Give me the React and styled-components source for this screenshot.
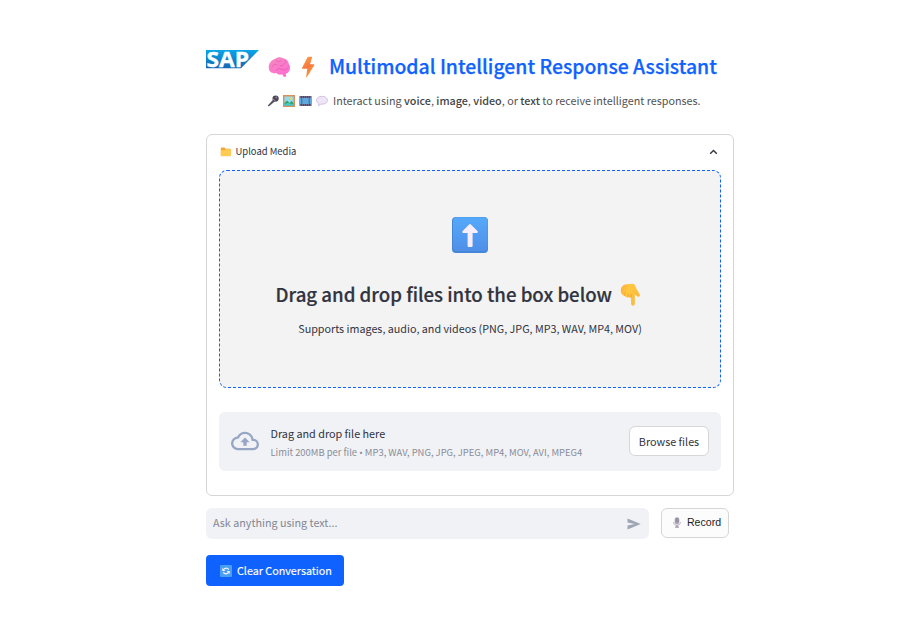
import React from 'react';
import styled, { createGlobalStyle } from 'styled-components';

const GlobalStyle = createGlobalStyle`
  * { box-sizing: border-box; }
  body {
    margin: 0;
    background: #fff;
    color: #31333f;
    font-family: "Noto Sans CJK SC", "Noto Sans", sans-serif;
    font-size: 10.8px;
    line-height: 16px;
  }
  button, input { font: inherit; color: inherit; margin: 0; }
  h1, h3, p { margin: 0; }
  svg { display: block; flex: none; overflow: visible; }
`;

const Page = styled.main`
  width: 528px;
  margin-left: 206px;
  padding-top: 50px;
`;

const Header = styled.header`
  display: flex;
  height: 84px;
`;

const HeaderText = styled.div`
  padding: 2px 0 0 7px;
`;

const Title = styled.h1`
  display: flex;
  align-items: center;
  height: 28px;
  padding-left: 1px;
  color: #0f62fe;
  font-size: 19.4px;
  font-weight: 500;
  line-height: 28px;
  white-space: nowrap;
  -webkit-text-stroke: 0.25px;
`;

const TitleIcons = styled.span`
  display: flex;
  align-items: center;
  gap: 10px;
  width: 61px;
  padding-top: 1px;
`;

const Subtitle = styled.p`
  display: flex;
  align-items: center;
  gap: 4px;
  margin-top: 13px;
  color: #525252;
  font-size: 10.77px;
  white-space: nowrap;
  b { font-weight: 500; color: #444; }
`;

const SubtitleIcons = styled.span`
  display: flex;
  gap: 4px;
  width: 62px;
`;

const Expander = styled.section`
  height: 362px;
  border: 1px solid #d6d6d8;
  border-radius: 6px;
  padding: 0 12px;
`;

const Summary = styled.div`
  display: flex;
  align-items: center;
  height: 35px;
  padding: 0 3px 2px 1px;
  font-size: 9.45px;
`;

const SummaryLabel = styled.span`
  flex: 1;
  padding: 0 0 2px 4.5px;
`;

const DropBox = styled.div`
  display: flex;
  flex-direction: column;
  align-items: center;
  height: 218px;
  padding-top: 46px;
  border: 1px dashed #0f62fe;
  border-radius: 8px;
  background: #f3f3f3;
`;

const DropTitle = styled.h3`
  display: flex;
  align-items: center;
  gap: 8px;
  width: 389px;
  height: 28px;
  margin-top: 27px;
  font-size: 18.65px;
  font-weight: 500;
  line-height: 28px;
  white-space: nowrap;
  -webkit-text-stroke: 0.2px;
`;

const DropHint = styled.p`
  margin-top: 13px;
  font-size: 10.75px;
  white-space: nowrap;
`;

const Uploader = styled.div`
  display: flex;
  align-items: center;
  height: 59px;
  margin-top: 24px;
  padding: 0 12px 1px 11.5px;
  border-radius: 6px;
  background: #f0f2f6;
`;

const UploaderText = styled.div`
  flex: 1;
  padding: 4px 0 0 12px;
`;

const Limit = styled.p`
  margin-top: 3px;
  color: #8b8d97;
  font-size: 9.42px;
  white-space: nowrap;
`;

const Bullet = styled.span`
  font-family: "Noto Sans", sans-serif;
`;

const OutlineButton = styled.button`
  display: flex;
  align-items: center;
  justify-content: center;
  width: ${(p) => p.$width}px;
  height: 30px;
  padding: 0;
  border: 1px solid #d6d6d9;
  border-radius: 6px;
  background: #fff;
  white-space: nowrap;
`;

const RecordButton = styled(OutlineButton)`
  gap: 5px;
  padding: 0 7px 2px 10px;
  background: #fcfcfd;
  color: #1c1e26;
  font-family: "Liberation Sans", Arial, sans-serif;
  font-size: 10.6px;
`;

const Composer = styled.div`
  display: flex;
  gap: 12px;
  margin-top: 12px;
`;

const ChatBox = styled.div`
  display: flex;
  align-items: center;
  width: 443px;
  height: 31px;
  padding: 0 8px 0 7px;
  border-radius: 6px;
  background: #f0f2f6;
`;

const ChatInput = styled.input`
  flex: 1;
  height: 18px;
  padding: 0 0 2px;
  border: 0;
  outline: 0;
  background: none;
  font-size: 10.75px;
  &::placeholder { color: #858792; opacity: 1; }
`;

const ClearButton = styled.button`
  display: flex;
  align-items: center;
  gap: 5px;
  width: 138px;
  height: 31px;
  margin-top: 16px;
  padding: 0 0 0 14px;
  border: 0;
  border-radius: 4px;
  background: #0f62fe;
  color: #fff;
  font-size: 10.75px;
  white-space: nowrap;
  -webkit-text-stroke: 0.15px;
`;

const SapLogo = () => (
  <svg width="54" height="24" viewBox="0 0 54 24">
    <defs>
      <linearGradient id="sap" x1="0" y1="0" x2="0" y2="1">
        <stop offset="0" stopColor="#0aa5e6" />
        <stop offset="1" stopColor="#1665b5" />
      </linearGradient>
    </defs>
    <path d="M0 0H53L35 18.3H0Z" fill="url(#sap)" />
    <text x="0.500" y="16.800" textLength="42.500" lengthAdjust="spacingAndGlyphs" fill="#fff" stroke="#fff" strokeWidth=".4"
      fontFamily="Open Sans, Liberation Sans, sans-serif" fontWeight="700" fontSize="22">SAP</text>
  </svg>
);

const Brain = () => (
  <svg width="23" height="22" viewBox="0 0 23 22">
    <defs>
      <linearGradient id="brain" x1="0" y1="0" x2=".5" y2="1">
        <stop offset="0" stopColor="#f48ac0" />
        <stop offset="1" stopColor="#ff6fd0" />
      </linearGradient>
    </defs>
    <path d="M.8 12C.3 8 3 4 7 3C9 .9 13 .9 15 2.300C18.500 2.500 20.500 5.500 20.900 8C22.700 10.500 22.400 14 20.500 16C19.800 17 18.500 17.600 17.800 17.800L18.200 20Q17 21.500 15.500 20.500L14.200 18.300C11.500 19.300 9.500 18.200 8.500 17C4.500 18 .8 15.800 .8 12Z" fill="url(#brain)" />
    <path d="M4 11Q6 7 9 8.500M8 4.500Q10 7 13 5M12 10Q15 11 16.500 7.500M8 14Q11 11 14 13.500Q17 15 20 12M17 5Q18 6 18 7" fill="none" stroke="#df5cae" strokeWidth=".7" strokeLinecap="round" />
  </svg>
);

const Bolt = () => (
  <svg width="15" height="22" viewBox="0 0 15 22">
    <defs>
      <linearGradient id="bolt" x1="0" y1="0" x2=".5" y2="1">
        <stop offset="0" stopColor="#ffb04a" />
        <stop offset=".55" stopColor="#f8763f" />
        <stop offset="1" stopColor="#f7a03c" />
      </linearGradient>
    </defs>
    <path d="M7.300 .8H10.500Q11.300 .8 11 1.600L9 8.300H12.800Q13.800 8.400 13.200 9.300L6 21Q5.300 21.700 5.200 20.800L6.200 12.800H1.500Q.7 12.600 1 11.900L6.300 1.500Q6.700 .8 7.300 .8Z" fill="url(#bolt)" />
  </svg>
);

const Mic = () => (
  <svg width="12" height="12" viewBox="0 0 12 12">
    <path d="M6.200 4.500L8 6.300L1.800 11.500L.8 10.500Z" fill="#5b5262" />
    <circle cx="8.600" cy="3.600" r="3.100" fill="#4b4553" />
    <path d="M5.800 3.600L9 6.700" stroke="#9a92a3" strokeWidth="1" />
    <circle cx="9.300" cy="2.500" r="1" fill="#8b8593" />
  </svg>
);

const Picture = () => (
  <svg width="12" height="12" viewBox="0 0 12 12">
    <path d="M0 0H12V12H0Z" fill="#d9905f" />
    <path d="M1.500 1.500H10.500V10.500H1.500Z" fill="#8edcf2" />
    <path d="M1.500 8L4 5.500L6.500 8L8.500 6L10.500 8V10.500H1.500Z" fill="#2fa66a" />
    <path d="M1.500 9L5 8L10.500 9.500V10.500H1.500Z" fill="#4bc5cf" />
    <circle cx="8" cy="3.500" r="1.200" fill="#ffd447" />
  </svg>
);

const Film = () => (
  <svg width="13" height="12" viewBox="0 0 13 12">
    <path d="M.5 1H12.500V11H.5Z" fill="#4b4766" />
    <path d="M.5 3H2.500V9H.5ZM3.200 3H9.800V9H3.200ZM10.500 3H12.500V9H10.500Z" fill="#5fa8df" />
    <path d="M1 2H12.500M1 10H12.500" stroke="#9f99b8" strokeWidth=".8" strokeDasharray="1 1" />
  </svg>
);

const Bubble = () => (
  <svg width="12" height="12" viewBox="0 0 12 12">
    <path d="M6 1.300C9.200 1.300 11.500 3 11.500 5.300C11.500 7.700 9.200 9.200 6 9.200L4.500 9.100Q4 10.600 2.600 10.900Q2.200 10.800 2.500 10.200L2.700 8.400C1.300 7.700 .5 6.600 .5 5.300C.5 3 2.800 1.300 6 1.300Z" fill="#eee6f7" stroke="#cbb9dc" strokeWidth=".8" />
  </svg>
);

const Folder = () => (
  <svg width="11" height="10" viewBox="0 0 11 10">
    <path d="M.8 1.300Q.8 .6 1.500 .6H4.500L5.500 1.800H10.300Q11 1.800 11 2.500V8H.8Z" fill="#eda83b" />
    <path d="M.8 3.300H4.700L5.700 2.300H11V8.500Q11 9.300 10.300 9.300H1.500Q.8 9.300 .8 8.500Z" fill="#ffcb55" />
  </svg>
);

const Chevron = () => (
  <svg width="9" height="8" viewBox="0 0 9 8">
    <path d="M1.200 5.800L4.500 2.600L7.800 5.800" fill="none" stroke="#31333f" strokeWidth="1.400" />
  </svg>
);

const UpArrow = () => (
  <svg width="36" height="36" viewBox="0 0 36 36">
    <defs>
      <linearGradient id="tile" x1="0" y1="0" x2="0" y2="1">
        <stop offset="0" stopColor="#55a9fb" />
        <stop offset="1" stopColor="#4f8fe8" />
      </linearGradient>
    </defs>
    <rect width="36" height="36" rx="4" fill="#4485d6" />
    <rect x="1" y=".3" width="34.700" height="34" rx="4" fill="url(#tile)" />
    <path d="M17.400 7.300Q18 6.700 18.600 7.300L25.700 14.300Q26.300 15.800 25 16H20.600V29Q20.600 30 19.600 30H16.600Q15.600 30 15.600 29V16H11Q9.800 15.600 10.400 14.300Z" fill="#f9effc" />
  </svg>
);

const HandDown = () => (
  <svg width="21" height="23" viewBox="0 0 21 23">
    <defs>
      <linearGradient id="hand" x1="0" y1="0" x2="1" y2=".6">
        <stop offset="0" stopColor="#ffa63d" />
        <stop offset=".4" stopColor="#ffc83f" />
        <stop offset="1" stopColor="#f9b93c" />
      </linearGradient>
    </defs>
    <path d="M.8 8C.8 4 3 1.500 7 1.300L12 .8C14.500 .8 15.500 2.500 16 5L19.800 11.500C20.500 13 19 14.300 17.500 13.500L14.800 11.500V21Q14.500 22.700 13 22.700Q11.300 22.700 11.100 21L10.900 14.300Q9 15.500 7.800 14Q5.500 14.800 4.500 12.800Q1.100 12.300 .8 8Z" fill="url(#hand)" />
    <path d="M4.600 12.500L5.300 9.500M7.900 13.800L8.300 11M11 14V11.500" fill="none" stroke="#ec9636" strokeWidth=".7" strokeLinecap="round" />
  </svg>
);

const CloudUpload = () => (
  <svg width="28" height="28" viewBox="0 0 24 24" fill="#97a6c3">
    <path d="M19.350 10.040A7.490 7.490 0 0 0 12 4C9.110 4 6.600 5.640 5.350 8.040A5.994 5.994 0 0 0 0 14c0 3.310 2.690 6 6 6h13c2.760 0 5-2.240 5-5 0-2.640-2.050-4.780-4.650-4.960zM19 18H6c-2.210 0-4-1.790-4-4 0-2.050 1.530-3.760 3.560-3.970l1.070-.11.5-.95A5.469 5.469 0 0 1 12 6c2.620 0 4.880 1.860 5.390 4.430l.3 1.500 1.530.11A2.980 2.980 0 0 1 22 15c0 1.650-1.350 3-3 3zM8 13h2.550v3h2.900v-3H16l-4-4z" />
  </svg>
);

const Send = () => (
  <svg width="14" height="12" viewBox="0 0 14 12">
    <path d="M.5 .5L13.700 6L.5 11.500V7.500L7.700 6L.5 4.500Z" fill="#a0a5b5" />
  </svg>
);

const StudioMic = () => (
  <svg width="10" height="11" viewBox="0 0 10 11">
    <path d="M1.500 5Q1.500 8.300 5 8.300Q8.500 8.300 8.500 5" fill="none" stroke="#bdb6c6" strokeWidth="1" />
    <path d="M4.300 8H5.700V9.500H7V10.700H3V9.500H4.300Z" fill="#9f98ab" />
    <rect x="2.700" y=".3" width="4.600" height="7" rx="2.300" fill="#aaa3b4" />
    <path d="M3 4.200H7M4.300 1V3.500M5.800 1V3.500" stroke="#857e90" strokeWidth=".7" />
  </svg>
);

const Refresh = () => (
  <svg width="12" height="12" viewBox="0 0 12 12">
    <rect width="12" height="12" rx="1" fill="#4a9ff0" />
    <path d="M3.200 5.300Q4 3.200 6.200 3.200Q7.800 3.200 8.700 4.600M8.800 6.700Q8 8.800 5.800 8.800Q4.200 8.800 3.300 7.400" fill="none" stroke="#f4f0ff" strokeWidth="1.300" />
    <path d="M2.300 3V6H5.300ZM9.700 9V6H6.700Z" fill="#f4f0ff" />
  </svg>
);

export default function App() {
  return (
    <>
      <GlobalStyle />
      <Page>
        <Header>
          <SapLogo />
          <HeaderText>
            <Title>
              <TitleIcons><Brain /><Bolt /></TitleIcons>
              Multimodal Intelligent Response Assistant
            </Title>
            <Subtitle>
              <SubtitleIcons><Mic /><Picture /><Film /><Bubble /></SubtitleIcons>
              <span>
                Interact using <b>voice</b>, <b>image</b>, <b>video</b>, or <b>text</b> to receive intelligent responses.
              </span>
            </Subtitle>
          </HeaderText>
        </Header>
        <Expander>
          <Summary>
            <Folder />
            <SummaryLabel>Upload Media</SummaryLabel>
            <Chevron />
          </Summary>
          <DropBox>
            <UpArrow />
            <DropTitle>Drag and drop files into the box below <HandDown /></DropTitle>
            <DropHint>Supports images, audio, and videos (PNG, JPG, MP3, WAV, MP4, MOV)</DropHint>
          </DropBox>
          <Uploader>
            <CloudUpload />
            <UploaderText>
              <p>Drag and drop file here</p>
              <Limit>Limit 200MB per file <Bullet>•</Bullet> MP3, WAV, PNG, JPG, JPEG, MP4, MOV, AVI, MPEG4</Limit>
            </UploaderText>
            <OutlineButton $width={80}>Browse files</OutlineButton>
          </Uploader>
        </Expander>
        <Composer>
          <ChatBox>
            <ChatInput placeholder="Ask anything using text..." />
            <Send />
          </ChatBox>
          <RecordButton $width={68}><StudioMic />Record</RecordButton>
        </Composer>
        <ClearButton><Refresh />Clear Conversation</ClearButton>
      </Page>
    </>
  );
}
